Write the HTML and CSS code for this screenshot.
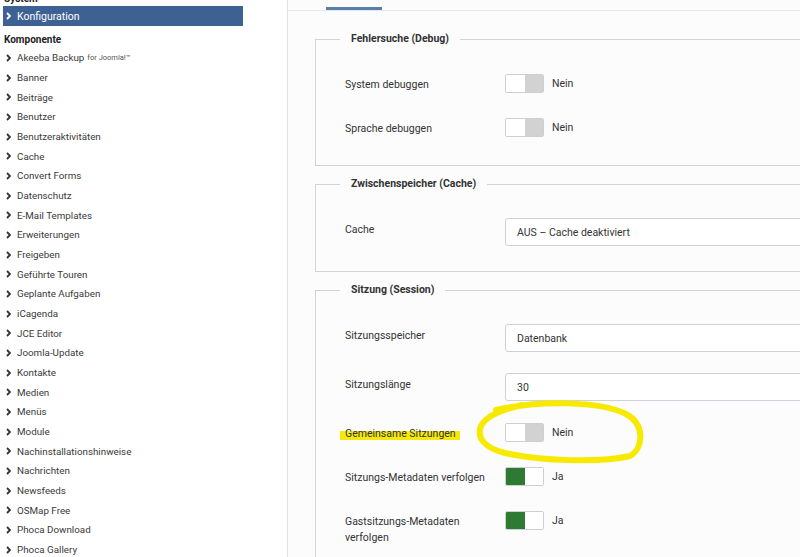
FILE: index.html
```html
<!DOCTYPE html>
<html lang="de">

<head>
    <meta charset="UTF-8">
    <meta name="viewport" content="width=device-width, initial-scale=1.0">
    <title>Konfiguration</title>
    <link rel="stylesheet" href="styles.css">
</head>

<body>
    <div class="page">
        <aside class="sidebar">
            <h3 class="group-title">System</h3>
            <a class="nav-item active"><svg class="chev" viewBox="0 0 5 8"><path d="M1 1l3 3-3 3" /></svg>Konfiguration</a>
            <h3 class="group-title group-title--spaced">Komponente</h3>
            <ul class="nav-list">
                <li class="nav-item"><svg class="chev" viewBox="0 0 5 8"><path d="M1 1l3 3-3 3" /></svg>Akeeba Backup<small>for Joomla!™</small></li>
                <li class="nav-item"><svg class="chev" viewBox="0 0 5 8"><path d="M1 1l3 3-3 3" /></svg>Banner</li>
                <li class="nav-item"><svg class="chev" viewBox="0 0 5 8"><path d="M1 1l3 3-3 3" /></svg>Beiträge</li>
                <li class="nav-item"><svg class="chev" viewBox="0 0 5 8"><path d="M1 1l3 3-3 3" /></svg>Benutzer</li>
                <li class="nav-item"><svg class="chev" viewBox="0 0 5 8"><path d="M1 1l3 3-3 3" /></svg>Benutzeraktivitäten</li>
                <li class="nav-item"><svg class="chev" viewBox="0 0 5 8"><path d="M1 1l3 3-3 3" /></svg>Cache</li>
                <li class="nav-item"><svg class="chev" viewBox="0 0 5 8"><path d="M1 1l3 3-3 3" /></svg>Convert Forms</li>
                <li class="nav-item"><svg class="chev" viewBox="0 0 5 8"><path d="M1 1l3 3-3 3" /></svg>Datenschutz</li>
                <li class="nav-item"><svg class="chev" viewBox="0 0 5 8"><path d="M1 1l3 3-3 3" /></svg>E-Mail Templates</li>
                <li class="nav-item"><svg class="chev" viewBox="0 0 5 8"><path d="M1 1l3 3-3 3" /></svg>Erweiterungen</li>
                <li class="nav-item"><svg class="chev" viewBox="0 0 5 8"><path d="M1 1l3 3-3 3" /></svg>Freigeben</li>
                <li class="nav-item"><svg class="chev" viewBox="0 0 5 8"><path d="M1 1l3 3-3 3" /></svg>Geführte Touren</li>
                <li class="nav-item"><svg class="chev" viewBox="0 0 5 8"><path d="M1 1l3 3-3 3" /></svg>Geplante Aufgaben</li>
                <li class="nav-item"><svg class="chev" viewBox="0 0 5 8"><path d="M1 1l3 3-3 3" /></svg>iCagenda</li>
                <li class="nav-item"><svg class="chev" viewBox="0 0 5 8"><path d="M1 1l3 3-3 3" /></svg>JCE Editor</li>
                <li class="nav-item"><svg class="chev" viewBox="0 0 5 8"><path d="M1 1l3 3-3 3" /></svg>Joomla-Update</li>
                <li class="nav-item"><svg class="chev" viewBox="0 0 5 8"><path d="M1 1l3 3-3 3" /></svg>Kontakte</li>
                <li class="nav-item"><svg class="chev" viewBox="0 0 5 8"><path d="M1 1l3 3-3 3" /></svg>Medien</li>
                <li class="nav-item"><svg class="chev" viewBox="0 0 5 8"><path d="M1 1l3 3-3 3" /></svg>Menüs</li>
                <li class="nav-item"><svg class="chev" viewBox="0 0 5 8"><path d="M1 1l3 3-3 3" /></svg>Module</li>
                <li class="nav-item"><svg class="chev" viewBox="0 0 5 8"><path d="M1 1l3 3-3 3" /></svg>Nachinstallationshinweise</li>
                <li class="nav-item"><svg class="chev" viewBox="0 0 5 8"><path d="M1 1l3 3-3 3" /></svg>Nachrichten</li>
                <li class="nav-item"><svg class="chev" viewBox="0 0 5 8"><path d="M1 1l3 3-3 3" /></svg>Newsfeeds</li>
                <li class="nav-item"><svg class="chev" viewBox="0 0 5 8"><path d="M1 1l3 3-3 3" /></svg>OSMap Free</li>
                <li class="nav-item"><svg class="chev" viewBox="0 0 5 8"><path d="M1 1l3 3-3 3" /></svg>Phoca Download</li>
                <li class="nav-item"><svg class="chev" viewBox="0 0 5 8"><path d="M1 1l3 3-3 3" /></svg>Phoca Gallery</li>
            </ul>
        </aside>

        <main class="main">
            <div class="tabs">
                <div class="tab active"><span>System</span></div>
            </div>

            <div class="content">
                <fieldset class="options">
                    <legend>Fehlersuche (Debug)</legend>
                    <div class="row">
                        <div class="label">System debuggen</div>
                        <div class="switch"><span></span><span></span></div>
                        <span class="switch-text">Nein</span>
                    </div>
                    <div class="row">
                        <div class="label">Sprache debuggen</div>
                        <div class="switch"><span></span><span></span></div>
                        <span class="switch-text">Nein</span>
                    </div>
                </fieldset>

                <fieldset class="options">
                    <legend>Zwischenspeicher (Cache)</legend>
                    <div class="row tall">
                        <div class="label">Cache</div>
                        <div class="select">AUS – Cache deaktiviert</div>
                    </div>
                </fieldset>

                <fieldset class="options">
                    <legend>Sitzung (Session)</legend>
                    <div class="row tall">
                        <div class="label">Sitzungsspeicher</div>
                        <div class="select">Datenbank</div>
                    </div>
                    <div class="row tall">
                        <div class="label">Sitzungslänge</div>
                        <div class="select">30</div>
                    </div>
                    <div class="row">
                        <div class="label"><span class="marker">Gemeinsame Sitzungen</span></div>
                        <div class="switch"><span></span><span></span></div>
                        <span class="switch-text">Nein</span>
                    </div>
                    <div class="row">
                        <div class="label">Sitzungs-Metadaten verfolgen</div>
                        <div class="switch on"><span></span><span></span></div>
                        <span class="switch-text">Ja</span>
                    </div>
                    <div class="row">
                        <div class="label">Gastsitzungs-Metadaten verfolgen</div>
                        <div class="switch on"><span></span><span></span></div>
                        <span class="switch-text">Ja</span>
                    </div>
                </fieldset>
            </div>
        </main>

        <!-- hand-drawn marker circle from the screenshot -->
        <svg class="scribble" viewBox="0 0 800 557">
            <path d="M496 410 C540 400 600 401 626 414 C645 424 644 448 630 456 C600 463 540 461 505 453 C485 448 476 438 481 426 C486 416 500 410 522 405" />
        </svg>
    </div>
</body>
</html>
```

FILE: styles.css
```css
body {
    margin: 0;
    font-family: Roboto, "Liberation Sans", sans-serif;
    color: #333;
}

.page {
    position: relative;
    display: flex;
    width: 800px;
    height: 557px;
    overflow: hidden;
}

/* sidebar */

.sidebar {
    flex: none;
    width: 287px;
    margin-top: -8px;
    background: #fff;
}

.group-title {
    margin: 0;
    padding-left: 4px;
    font-size: 10px;
    font-weight: 700;
    line-height: 14px;
    color: #222;
}

.group-title--spaced {
    margin: 7px 0 1px;
}

.nav-list {
    margin: 0;
    padding: 0;
    list-style: none;
}

.nav-item {
    display: flex;
    align-items: center;
    height: 19.68px;
    padding-left: 6px;
    font-size: 9.8px;
    color: #3a3a3a;
}

.nav-item small {
    margin-left: 3px;
    font-size: 7.5px;
    color: #555;
}

.nav-item.active {
    width: 240px;
    height: 20px;
    margin-left: 3px;
    padding-left: 3px;
    box-sizing: border-box;
    background: #3d6192;
    color: #fff;
    font-size: 10.5px;
}

.chev {
    flex: none;
    width: 5px;
    height: 8px;
    margin-right: 6px;
    fill: none;
    stroke: #333;
    stroke-width: 1.8;
}

.active .chev {
    stroke: #fff;
}

/* main area */

.main {
    flex: 1;
    min-width: 0;
    overflow: hidden;
    border-left: 1px solid #dfe3e8;
    background: #fcfcfd;
}

.tabs {
    display: flex;
    height: 10px;
    padding-left: 38px;
    border-bottom: 1px solid #e3e7eb;
}

.tab {
    width: 56px;
    height: 10px;
    box-sizing: border-box;
    text-align: center;
    font-size: 11px;
    color: #333;
}

.tab span {
    display: block;
    margin-top: -11px;
    line-height: 11px;
}

.tab.active {
    border-bottom: 3px solid #5a7fac;
}

.content {
    padding: 21px 0 0 27px;
}

.options {
    width: 700px;
    margin: 0 0 11px;
    padding: 16px 0 15px 29px;
    border: 1px solid #cfd4da;
}

.options + .options + .options {
    margin-top: 1px;
}

.options legend {
    margin-left: -5px;
    padding: 0 11px;
    font-size: 10.5px;
    font-weight: 700;
    line-height: 14px;
    color: #333;
}

.row {
    display: flex;
    align-items: flex-start;
    padding: 12px 0 13px;
}

.row.tall {
    padding: 11px 0 10px;
}

.label {
    flex: none;
    width: 150px;
    margin-right: 10px;
    padding-top: 3px;
    font-size: 10.5px;
    line-height: 16px;
    color: #333;
}

.tall .label {
    padding-top: 4px;
}

.marker {
    margin-left: -5px;
    padding: 0 4px 0 5px;
    background: linear-gradient(to bottom, transparent 4px, #f5e90c 4px, #f5e90c 15px, transparent 15px);
}

.select {
    display: flex;
    align-items: center;
    width: 400px;
    height: 28px;
    box-sizing: border-box;
    padding-left: 11px;
    border: 1px solid #ccd2d8;
    border-radius: 3px;
    background: #fff;
    font-size: 10.5px;
    color: #333;
}

.switch {
    display: flex;
    flex: none;
    width: 39px;
    height: 19px;
    box-sizing: border-box;
    border: 1px solid #cbd0d5;
    border-radius: 2px;
    overflow: hidden;
}

.switch span {
    flex: 1;
    background: #fff;
}

.switch span + span {
    background: #d2d2d2;
}

.switch.on span {
    background: #2e7a33;
}

.switch.on span + span {
    background: #fff;
}

.switch-text {
    margin-left: 8px;
    font-size: 10.5px;
    line-height: 19px;
    color: #333;
}

.scribble {
    position: absolute;
    left: 0;
    top: 0;
    width: 800px;
    height: 557px;
    pointer-events: none;
    fill: none;
    stroke: #f7ea00;
    stroke-width: 6;
    stroke-linecap: round;
}
```
